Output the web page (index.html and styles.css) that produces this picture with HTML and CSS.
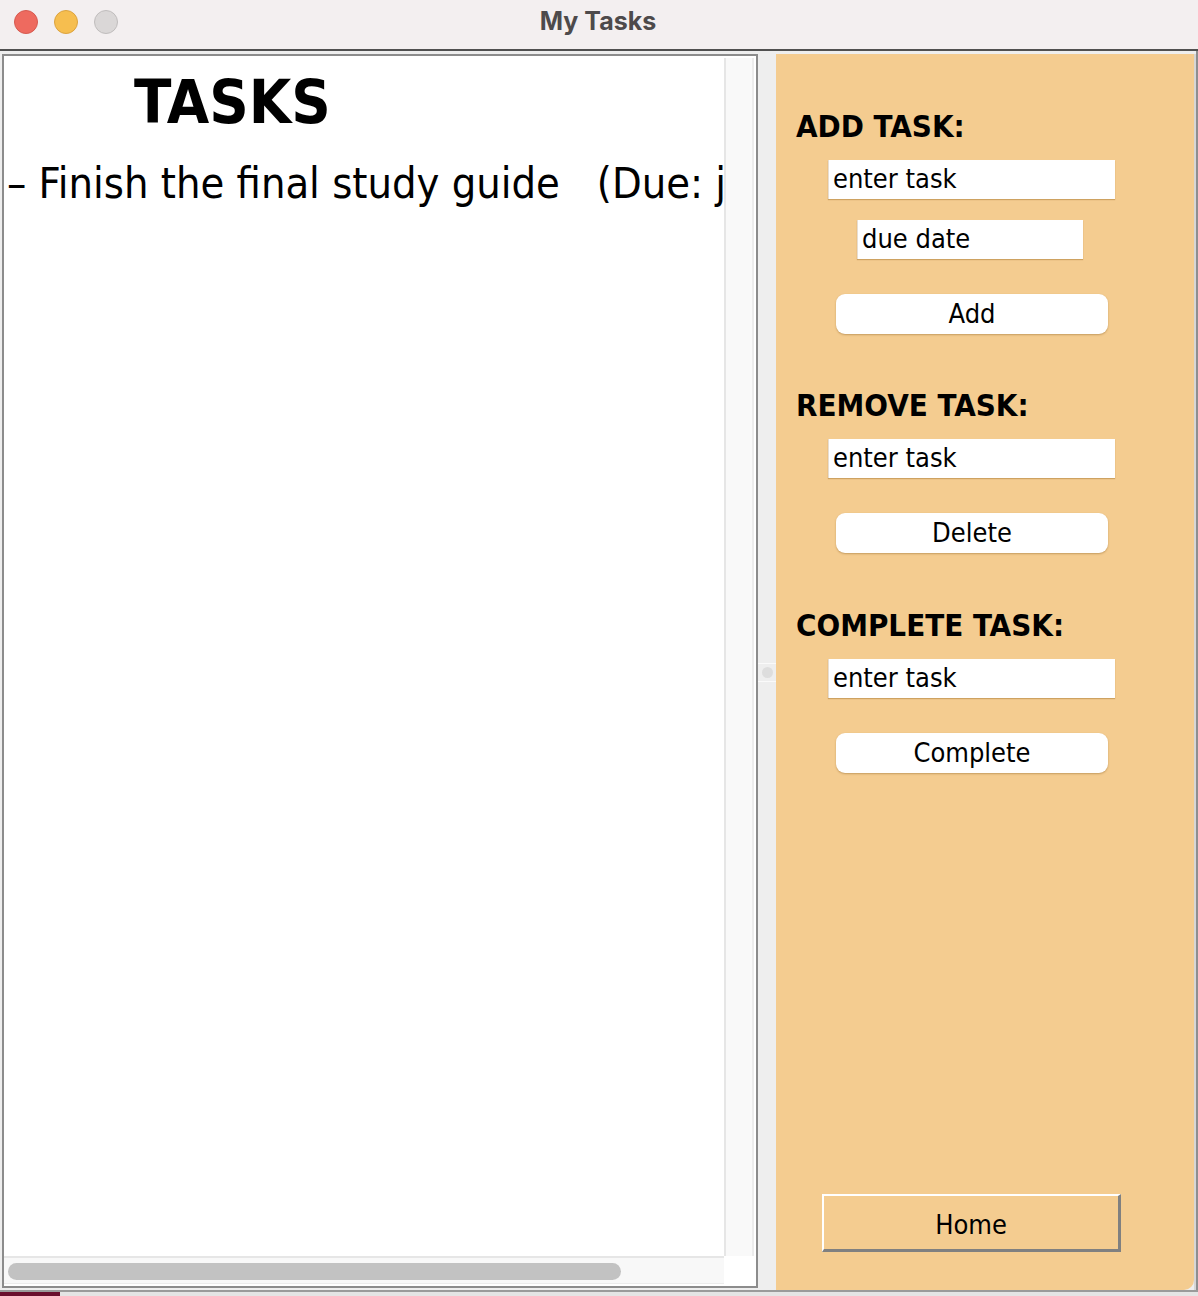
FILE: index.html
```html
<!DOCTYPE html>
<html>
<head>
<meta charset="utf-8">
<title>My Tasks</title>
<link rel="stylesheet" href="styles.css">
</head>
<body>
<div class="window">
  <div class="titlebar">
    <div class="lights">
      <span class="light red"></span>
      <span class="light yellow"></span>
      <span class="light gray"></span>
    </div>
    <div class="title">My Tasks</div>
  </div>
  <div class="body">
    <div class="scrollpane">
      <div class="pane-top">
        <div class="viewport">
          <div class="heading">TASKS</div>
          <div class="task">– Finish the final study guide   (Due: june 5)</div>
        </div>
        <div class="vscroll"></div>
      </div>
      <div class="pane-bottom">
        <div class="hscroll"><div class="thumb"></div></div>
        <div class="corner"></div>
      </div>
    </div>
    <div class="divider"><div class="grip"><span class="dot"></span></div></div>
    <div class="controls">
      <div class="section-title first">ADD TASK:</div>
      <div class="field wide">enter task</div>
      <div class="field narrow">due date</div>
      <div class="btn">Add</div>
      <div class="section-title second">REMOVE TASK:</div>
      <div class="field wide">enter task</div>
      <div class="btn">Delete</div>
      <div class="section-title third">COMPLETE TASK:</div>
      <div class="field wide">enter task</div>
      <div class="btn">Complete</div>
      <div class="spacer"></div>
      <div class="home">Home</div>
    </div>
    <div class="edge"></div>
  </div>
  <div class="footer"><span class="desk"></span></div>
</div>
</body>
</html>
```
FILE: styles.css
```css
* { box-sizing: border-box; }
html, body { margin: 0; padding: 0; }
body {
  width: 1198px;
  height: 1296px;
  overflow: hidden;
  background: #e6e6e6;
  font-family: "DejaVu Sans Condensed", "DejaVu Sans", sans-serif;
  font-stretch: semi-condensed;
  color: #000;
}
.window { width: 1198px; height: 1296px; display: flex; flex-direction: column; }

.titlebar {
  height: 51px;
  flex: none;
  background: #f3eff0;
  border-bottom: 2px solid #505050;
  position: relative;
  display: flex;
  align-items: center;
  justify-content: center;
}
.lights {
  position: absolute;
  left: 14px;
  top: 10px;
  display: flex;
  gap: 16px;
}
.light {
  width: 24px; height: 24px; border-radius: 50%;
  display: block;
}
.red { background: #ee6a5f; border: 1px solid #d65a50; }
.yellow { background: #f6be4f; border: 1px solid #dca33f; }
.gray { background: #dad7d7; border: 1px solid #c0bdbd; }
.title {
  font-family: Inter, "Open Sans", sans-serif;
  font-stretch: normal;
  font-weight: 700;
  font-size: 25px;
  color: #4d4a4b;
  margin-top: -8px;
  margin-left: -2px;
}

.body {
  height: 1239px;
  flex: none;
  display: flex;
  padding-top: 3px;
  padding-left: 2px;
  background: #eeeeee;
  border-right: 2px solid #8e8e8e;
}
.scrollpane {
  width: 756px;
  height: 1234px;
  flex: none;
  border: 2px solid #8c8c8c;
  background: #fff;
  display: flex;
  flex-direction: column;
}
.pane-top { height: 1200px; display: flex; }
.viewport {
  width: 720px;
  overflow: hidden;
  background: #fff;
}
.heading {
  font-weight: 700;
  font-size: 61px;
  line-height: 60px;
  height: 60px;
  margin-top: 16px;
  padding-left: 130px;
}
.task {
  font-size: 43px;
  line-height: 50px;
  margin-top: 26px;
  padding-left: 3px;
  white-space: pre;
}
.vscroll {
  width: 32px;
  margin-top: 2px;
  border-left: 2px solid #e6e6e6;
  border-right: 2px solid #fff;
  background: #f9f9f9;
  box-shadow: inset -2px 0 0 #ececec;
}
.pane-bottom { height: 30px; display: flex; }
.hscroll {
  width: 720px;
  border-top: 2px solid #e6e6e6;
  border-bottom: 2px solid #fff;
  background: #f8f8f8;
  box-shadow: inset 0 -1px 0 #ececec;
  padding: 5px 0 0 4px;
}
.thumb {
  width: 613px;
  height: 17px;
  border-radius: 9px;
  background: #c2c2c2;
}
.corner { width: 32px; background: #fff; }

.divider {
  width: 18px;
  flex: none;
  display: flex;
  align-items: center;
}
.grip {
  width: 18px;
  height: 19px;
  border-top: 1px solid #fafafa;
  border-bottom: 1px solid #fafafa;
  display: flex;
  align-items: center;
  justify-content: center;
}
.dot { width: 11px; height: 11px; border-radius: 50%; background: #dddddd; display: block; }

.controls {
  width: 418px;
  height: 1236px;
  flex: none;
  background: #f4cc90;
  border-bottom-right-radius: 10px;
  display: flex;
  flex-direction: column;
  align-items: flex-start;
}
.edge { width: 2px; flex: none; background: #d6d6d6; }
.section-title {
  font-weight: 700;
  font-size: 31px;
  line-height: 36px;
  height: 36px;
  margin-left: 20px;
  white-space: nowrap;
}
.section-title.first { margin-top: 54px; }
.section-title.second { margin-top: 53px; }
.section-title.third { margin-top: 54px; }
.field {
  background: #fff;
  height: 39px;
  font-size: 27px;
  line-height: 38px;
  padding-left: 4px;
  border-left: 1px solid #e6ddd2;
  box-shadow: 0 1px 1px rgba(160, 110, 40, 0.45);
  white-space: nowrap;
}
.wide { width: 287px; margin-left: 52px; margin-top: 16px; }
.narrow { width: 226px; margin-left: 81px; margin-top: 21px; }
.btn {
  width: 272px;
  height: 40px;
  margin-left: 60px;
  margin-top: 35px;
  background: #fff;
  border-radius: 9px;
  box-shadow: 0 1px 2px rgba(140, 95, 35, 0.45);
  font-size: 27px;
  line-height: 40px;
  text-align: center;
}
.spacer { flex: 1; }
.home {
  width: 299px;
  height: 58px;
  margin-left: 46px;
  margin-bottom: 38px;
  border-top: 2px solid #fff;
  border-left: 2px solid #fff;
  border-right: 3px solid #808080;
  border-bottom: 3px solid #808080;
  font-size: 27px;
  line-height: 53px;
  padding-top: 2px;
  text-align: center;
}

.footer {
  flex: 1;
  border-top: 2px solid #9a9a9a;
  background: #e4e4e4;
  display: flex;
}
.desk { width: 60px; background: #6b0e2d; display: block; }
```
